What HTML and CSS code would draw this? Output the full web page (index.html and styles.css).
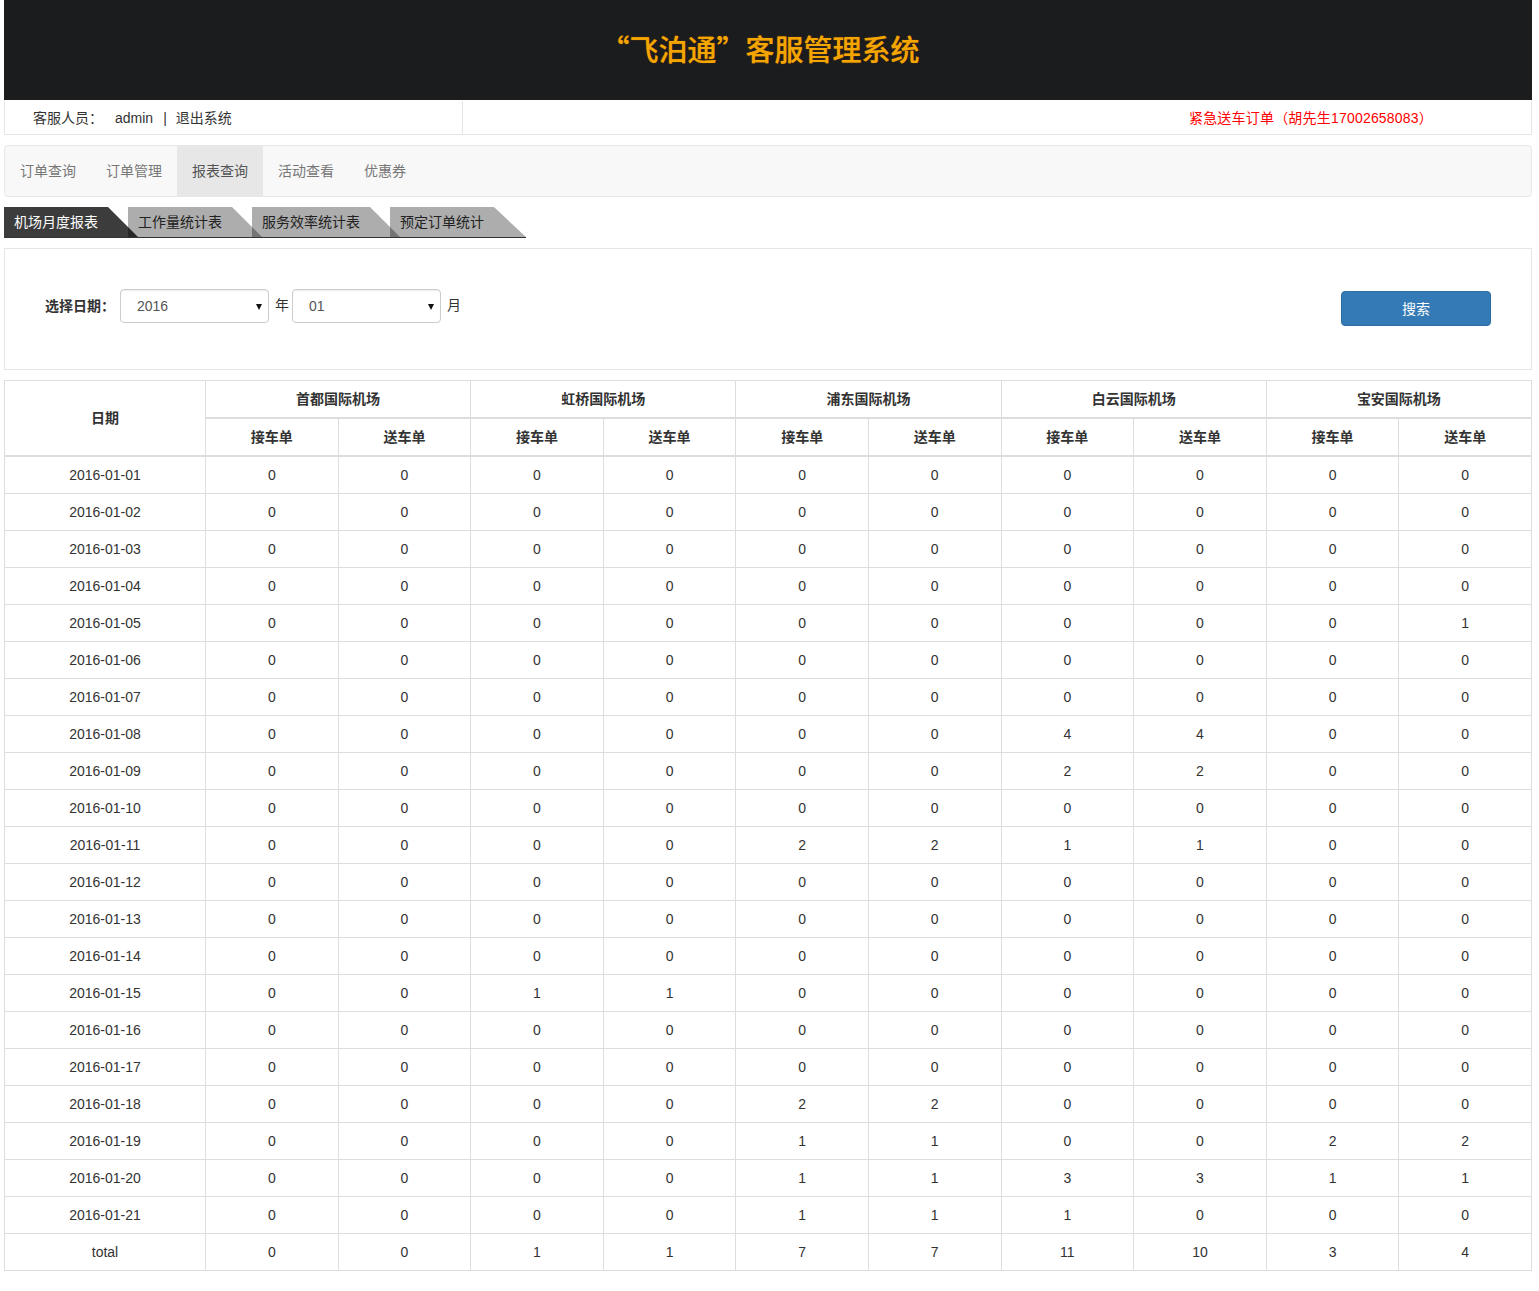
FILE: index.html
```html
<!DOCTYPE html>
<html lang="zh-CN">
<head>
<meta charset="utf-8">
<title>飞泊通客服管理系统</title>
<link rel="stylesheet" href="styles.css">
</head>
<body>
<div class="page">
  <header class="header">
    <h1 class="title">“飞泊通”客服管理系统</h1>
  </header>

  <div class="infobar">
    <div class="info-left">
      <span>客服人员：</span>
      <span class="user">admin</span>
      <span class="sep">|</span>
      <span>退出系统</span>
    </div>
    <div class="info-right">紧急送车订单（胡先生17002658083）</div>
  </div>

  <nav class="navbar">
    <a class="nav-item">订单查询</a>
    <a class="nav-item">订单管理</a>
    <a class="nav-item active">报表查询</a>
    <a class="nav-item">活动查看</a>
    <a class="nav-item">优惠券</a>
  </nav>

  <div class="tabs">
    <div class="tab active">机场月度报表</div>
    <div class="tab">工作量统计表</div>
    <div class="tab">服务效率统计表</div>
    <div class="tab last">预定订单统计</div>
  </div>

  <div class="panel">
    <div class="filter">
      <span class="label">选择日期：</span>
      <span class="sel">2016</span>
      <span class="unit">年</span>
      <span class="sel">01</span>
      <span class="unit">月</span>
    </div>
    <button class="btn">搜索</button>
  </div>

  <table class="report">
    <colgroup>
      <col class="col-date">
      <col><col><col><col><col><col><col><col><col><col>
    </colgroup>
    <thead>
      <tr>
        <th rowspan="2">日期</th>
        <th colspan="2">首都国际机场</th>
        <th colspan="2">虹桥国际机场</th>
        <th colspan="2">浦东国际机场</th>
        <th colspan="2">白云国际机场</th>
        <th colspan="2">宝安国际机场</th>
      </tr>
      <tr>
        <th>接车单</th><th>送车单</th>
        <th>接车单</th><th>送车单</th>
        <th>接车单</th><th>送车单</th>
        <th>接车单</th><th>送车单</th>
        <th>接车单</th><th>送车单</th>
      </tr>
    </thead>
    <tbody>
      <tr><td>2016-01-01</td><td>0</td><td>0</td><td>0</td><td>0</td><td>0</td><td>0</td><td>0</td><td>0</td><td>0</td><td>0</td></tr>
      <tr><td>2016-01-02</td><td>0</td><td>0</td><td>0</td><td>0</td><td>0</td><td>0</td><td>0</td><td>0</td><td>0</td><td>0</td></tr>
      <tr><td>2016-01-03</td><td>0</td><td>0</td><td>0</td><td>0</td><td>0</td><td>0</td><td>0</td><td>0</td><td>0</td><td>0</td></tr>
      <tr><td>2016-01-04</td><td>0</td><td>0</td><td>0</td><td>0</td><td>0</td><td>0</td><td>0</td><td>0</td><td>0</td><td>0</td></tr>
      <tr><td>2016-01-05</td><td>0</td><td>0</td><td>0</td><td>0</td><td>0</td><td>0</td><td>0</td><td>0</td><td>0</td><td>1</td></tr>
      <tr><td>2016-01-06</td><td>0</td><td>0</td><td>0</td><td>0</td><td>0</td><td>0</td><td>0</td><td>0</td><td>0</td><td>0</td></tr>
      <tr><td>2016-01-07</td><td>0</td><td>0</td><td>0</td><td>0</td><td>0</td><td>0</td><td>0</td><td>0</td><td>0</td><td>0</td></tr>
      <tr><td>2016-01-08</td><td>0</td><td>0</td><td>0</td><td>0</td><td>0</td><td>0</td><td>4</td><td>4</td><td>0</td><td>0</td></tr>
      <tr><td>2016-01-09</td><td>0</td><td>0</td><td>0</td><td>0</td><td>0</td><td>0</td><td>2</td><td>2</td><td>0</td><td>0</td></tr>
      <tr><td>2016-01-10</td><td>0</td><td>0</td><td>0</td><td>0</td><td>0</td><td>0</td><td>0</td><td>0</td><td>0</td><td>0</td></tr>
      <tr><td>2016-01-11</td><td>0</td><td>0</td><td>0</td><td>0</td><td>2</td><td>2</td><td>1</td><td>1</td><td>0</td><td>0</td></tr>
      <tr><td>2016-01-12</td><td>0</td><td>0</td><td>0</td><td>0</td><td>0</td><td>0</td><td>0</td><td>0</td><td>0</td><td>0</td></tr>
      <tr><td>2016-01-13</td><td>0</td><td>0</td><td>0</td><td>0</td><td>0</td><td>0</td><td>0</td><td>0</td><td>0</td><td>0</td></tr>
      <tr><td>2016-01-14</td><td>0</td><td>0</td><td>0</td><td>0</td><td>0</td><td>0</td><td>0</td><td>0</td><td>0</td><td>0</td></tr>
      <tr><td>2016-01-15</td><td>0</td><td>0</td><td>1</td><td>1</td><td>0</td><td>0</td><td>0</td><td>0</td><td>0</td><td>0</td></tr>
      <tr><td>2016-01-16</td><td>0</td><td>0</td><td>0</td><td>0</td><td>0</td><td>0</td><td>0</td><td>0</td><td>0</td><td>0</td></tr>
      <tr><td>2016-01-17</td><td>0</td><td>0</td><td>0</td><td>0</td><td>0</td><td>0</td><td>0</td><td>0</td><td>0</td><td>0</td></tr>
      <tr><td>2016-01-18</td><td>0</td><td>0</td><td>0</td><td>0</td><td>2</td><td>2</td><td>0</td><td>0</td><td>0</td><td>0</td></tr>
      <tr><td>2016-01-19</td><td>0</td><td>0</td><td>0</td><td>0</td><td>1</td><td>1</td><td>0</td><td>0</td><td>2</td><td>2</td></tr>
      <tr><td>2016-01-20</td><td>0</td><td>0</td><td>0</td><td>0</td><td>1</td><td>1</td><td>3</td><td>3</td><td>1</td><td>1</td></tr>
      <tr><td>2016-01-21</td><td>0</td><td>0</td><td>0</td><td>0</td><td>1</td><td>1</td><td>1</td><td>0</td><td>0</td><td>0</td></tr>
      <tr><td>total</td><td>0</td><td>0</td><td>1</td><td>1</td><td>7</td><td>7</td><td>11</td><td>10</td><td>3</td><td>4</td></tr>
    </tbody>
  </table>
</div>
</body>
</html>
```

FILE: styles.css
```css
* { box-sizing: border-box; }

body {
  margin: 0;
  font-family: "Liberation Sans", Arial, "Noto Sans CJK SC", sans-serif;
  font-size: 14px;
  line-height: 20px;
  color: #333;
  background: #fff;
}

.page {
  width: 1528px;
  margin-left: 4px;
  padding-bottom: 20px;
}

/* header */
.header {
  height: 100px;
  background: #1b1c1e;
  display: flex;
  align-items: center;
  justify-content: center;
}
.title {
  margin: 0 16px 0 0;
  font-family: "Noto Sans CJK SC", sans-serif;
  font-size: 29px;
  font-weight: 500;
  line-height: 36px;
  color: #f4a600;
  text-shadow: 0 0 1px #c06a00;
  transform: translateY(-2px);
}

/* info bar */
.infobar {
  display: flex;
  height: 35px;
  border: 1px solid #e5e5e5;
  border-top: 0;
  padding-top: 1px;
}
.info-left {
  width: 458px;
  padding-left: 28px;
  border-right: 1px solid #e5e5e5;
  display: flex;
  align-items: center;
}
.user { margin-left: 12px; }
.sep { margin: 0 9px 0 10px; }
.info-right {
  flex: 1;
  display: flex;
  align-items: center;
  justify-content: flex-end;
  padding-right: 98px;
  color: #ff0000;
  letter-spacing: 0.2px;
}

/* navbar */
.navbar {
  margin-top: 10px;
  height: 52px;
  background: #f8f8f8;
  border: 1px solid #e7e7e7;
  border-radius: 4px;
  display: flex;
}
.nav-item {
  padding: 15px;
  line-height: 20px;
  color: #777;
}
.nav-item.active {
  background: #e7e7e7;
  color: #555;
}

/* tabs */
.tabs {
  margin-top: 10px;
  display: flex;
  width: fit-content;
  padding-right: 32px;
  border-bottom: 1px solid #333;
}
.tab {
  position: relative;
  height: 30px;
  line-height: 30px;
  padding: 0 10px;
  margin-right: 20px;
  background: rgba(0, 0, 0, 0.32);
  color: #222;
}
.tab::after {
  content: "";
  position: absolute;
  left: 100%;
  top: 0;
  width: 0;
  height: 0;
  border-bottom: 30px solid rgba(0, 0, 0, 0.32);
  border-right: 30px solid transparent;
}
.tab.active {
  background: #3c3c3c;
  color: #fff;
}
.tab.active::after {
  border-bottom-color: #3c3c3c;
}
.tab.last { margin-right: 0; }
.tab.last::after { border-right-width: 32px; }

/* filter panel */
.panel {
  margin-top: 10px;
  border: 1px solid #e5e5e5;
  padding: 40px 40px 43px 40px;
  display: flex;
  justify-content: space-between;
  align-items: flex-start;
}
.filter {
  display: flex;
  align-items: center;
}
.label {
  font-weight: bold;
  line-height: 34px;
  margin-right: 5px;
}
.sel {
  position: relative;
  display: block;
  width: 149px;
  height: 34px;
  padding: 6px 16px;
  border: 1px solid #ccc;
  border-radius: 4px;
  color: #555;
  box-shadow: inset 0 1px 1px rgba(0, 0, 0, 0.075);
}
.sel::after {
  content: "";
  position: absolute;
  right: 6px;
  top: 14px;
  border-left: 3.5px solid transparent;
  border-right: 3.5px solid transparent;
  border-top: 6px solid #111;
}
.unit {
  margin: 0 3px 0 6px;
  position: relative;
  top: -1px;
}

.btn {
  margin-top: 2px;
  width: 150px;
  height: 35px;
  background: #337ab7;
  border: 1px solid #2e6da4;
  border-radius: 4px;
  color: #fff;
  font-family: inherit;
  font-size: 14px;
  line-height: 20px;
  padding: 6px 12px;
}

/* table */
.report {
  margin-top: 10px;
  width: 1528px;
  table-layout: fixed;
  border-collapse: collapse;
  border: 1px solid #ddd;
}
.col-date { width: 201px; }
.report th,
.report td {
  border: 1px solid #ddd;
  padding: 8px;
  line-height: 20px;
  text-align: center;
  vertical-align: middle;
  font-size: 14px;
  color: #333;
}
.report thead th {
  border-bottom-width: 2px;
  font-weight: bold;
}
```
